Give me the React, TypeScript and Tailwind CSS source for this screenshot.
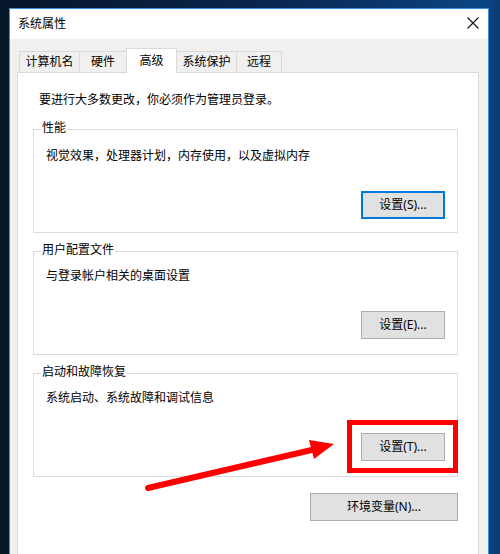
import React from "react";

function Btn({ label, w = "w-[84px]", focused = false }: { label: string; w?: string; focused?: boolean }) {
  return (
    <div
      className={`${w} h-[28px] flex items-center justify-center bg-[#e1e1e1] text-[12px] leading-[16px] text-black ${
        focused ? "border-2 border-[#0078d7]" : "border border-[#adadad]"
      }`}
    >
      {label}
    </div>
  );
}

function Group({ title, text, btn, pt, focused = false, className = "" }: { title: string; text: string; btn: string; pt: string; focused?: boolean; className?: string }) {
  return (
    <div className={`relative h-[104px] w-[425px] border border-[#dcdcdc] flex flex-col pl-[12px] pr-[12px] ${pt} ${className}`}>
      <span className="absolute top-[-10px] left-[7px] bg-white px-[1px] text-[12px] leading-[16px] text-black">{title}</span>
      <div className="text-[12px] leading-[16px] text-black">{text}</div>
      <div className="mt-[27px] flex justify-end">
        <Btn label={btn} focused={focused} />
      </div>
    </div>
  );
}

export default function App() {
  const tabBase = "flex items-center justify-center text-[12px] leading-[16px] text-black";
  return (
    <div className="relative w-[500px] h-[554px] overflow-hidden bg-[linear-gradient(90deg,#061528_0%,#0a2650_55%,#0b4584_97%,#0a3a72_100%)] pl-[9px] pt-[8px] font-['Noto_Sans','Noto_Sans_CJK_SC',sans-serif]">
      <div className="w-[480px] h-[560px] border border-[#3d8fe0] bg-[#f0f0f0] flex flex-col">
        {/* title bar */}
        <div className="h-[30px] bg-white flex items-center justify-between pl-[8px] pr-[9px] shrink-0">
          <span className="text-[12px] leading-[16px] text-black">系统属性</span>
          <svg width="12" height="12" viewBox="0 0 12 12" className="mb-[3px]">
            <path d="M0.5 0.5 L11.5 11.5 M11.5 0.5 L0.5 11.5" stroke="#111" strokeWidth="1.1" fill="none" />
          </svg>
        </div>
        {/* tabs */}
        <div className="mt-[9px] h-[24px] flex items-end pl-[9px] shrink-0">
          <div className={`${tabBase} w-[60px] h-[21px] border-l border-t border-[#d9d9d9] bg-[#f0f0f0]`}>计算机名</div>
          <div className={`${tabBase} w-[47px] h-[21px] border-l border-t border-[#d9d9d9] bg-[#f0f0f0]`}>硬件</div>
          <div className={`${tabBase} relative z-10 w-[51px] h-[25px] -mb-[1px] border-x border-t border-[#d9d9d9] bg-white pb-[1px]`}>高级</div>
          <div className={`${tabBase} w-[59px] h-[21px] border-t border-[#d9d9d9] bg-[#f0f0f0]`}>系统保护</div>
          <div className={`${tabBase} w-[46px] h-[21px] border-x border-t border-[#d9d9d9] bg-[#f0f0f0]`}>远程</div>
        </div>
        {/* panel */}
        <div className="ml-[7px] w-[462px] flex-1 border border-[#d9d9d9] bg-white pt-[19px] pl-[15px] pr-[20px] flex flex-col">
          <div className="ml-[6px] text-[12px] leading-[16px] text-black">要进行大多数更改，你必须作为管理员登录。</div>
          <Group className="mt-[21px]" pt="pt-[18px]" title="性能" text="视觉效果，处理器计划，内存使用，以及虚拟内存" btn="设置(S)..." focused />
          <Group className="mt-[18px]" pt="pt-[16px]" title="用户配置文件" text="与登录帐户相关的桌面设置" btn="设置(E)..." />
          <Group className="mt-[18px]" pt="pt-[16px]" title="启动和故障恢复" text="系统启动、系统故障和调试信息" btn="设置(T)..." />
          <div className="mt-[16px] w-[425px] flex justify-end">
            <Btn label="环境变量(N)..." w="w-[148px]" />
          </div>
        </div>
      </div>

      {/* annotation overlays */}
      <div className="absolute left-[347px] top-[420px] w-[111px] h-[53px] border-[5px] border-[#ff0000]" />
      <svg className="absolute left-0 top-0 pointer-events-none" width="500" height="554" viewBox="0 0 500 554">
        <line x1="148" y1="488" x2="316" y2="449" stroke="#ff0000" strokeWidth="6" strokeLinecap="round" />
        <polygon points="309,440 334,444 314,459" fill="#ff0000" />
      </svg>
    </div>
  );
}
